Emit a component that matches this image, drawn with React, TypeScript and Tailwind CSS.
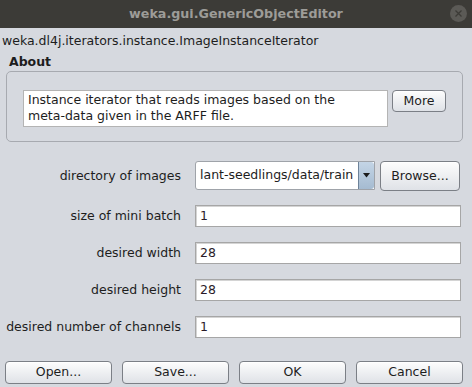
import React from 'react';

const font = { fontFamily: '"DejaVu Sans", "Liberation Sans", sans-serif' };

function SwingButton({ label, className }: { label: string; className: string }) {
  return (
    <div
      className={`flex shrink-0 items-center justify-center rounded-[4px] border border-[#7b7f86] bg-gradient-to-b from-[#fdfdfd] to-[#dfe2e7] text-[12.5px] text-[#1d1d1d] shadow-[inset_0_1px_0_#ffffff] ${className}`}
    >
      {label}
    </div>
  );
}

function Field({ value }: { value: string }) {
  return (
    <div className="flex h-[22px] w-[266px] items-center border border-[#a6a6a6] bg-white pl-[4px] text-[12.5px] text-[#2a1a28] shadow-[inset_1px_1px_0_#d4d4d4]">
      {value}
    </div>
  );
}

function Row({ label, children }: { label: string; children: React.ReactNode }) {
  return (
    <div className="flex shrink-0 items-center">
      <div className="w-[182px] whitespace-nowrap pr-[1px] text-right text-[12.5px] text-[#1d1d1d]">{label}</div>
      <div className="ml-[13px] flex">{children}</div>
    </div>
  );
}

export default function App() {
  return (
    <div className="flex h-[387px] w-[472px] flex-col overflow-hidden bg-[#d6d9df]" style={font}>
      {/* window title */}
      <div className="relative flex h-[28px] shrink-0 items-center justify-center bg-[#3c3b37]">
        <span className="text-[12.7px] font-bold text-[#9d9c98]">weka.gui.GenericObjectEditor</span>
        <div className="absolute right-[5px] top-[5px] flex h-[17px] w-[17px] items-center justify-center rounded-full bg-[#5b5a56]">
          <svg width="7" height="7" viewBox="0 0 7 7">
            <path d="M0.5 0.5 L6.5 6.5 M6.5 0.5 L0.5 6.5" stroke="#3c3b37" strokeWidth="1.3" />
          </svg>
        </div>
      </div>

      <div className="shrink-0 pl-[2px] pt-[4px] text-[12.5px] leading-[17px] text-[#1d1d1d]">
        weka.dl4j.iterators.instance.ImageInstanceIterator
      </div>

      <div className="shrink-0 pl-[9px] pt-[5px] text-[12.5px] font-bold leading-[16px] text-[#1d1d1d]">About</div>

      {/* about panel */}
      <div className="ml-[6px] mt-[1px] flex h-[71px] w-[457px] shrink-0 items-start rounded-[5px] border border-[#a7aab0] pl-[16px] pt-[18px]">
        <div className="h-[37px] w-[365px] border border-[#b4b4b4] bg-white px-[4px] pt-[1px] text-[12.5px] leading-[16px] text-[#1d1d1d]">
          Instance iterator that reads images based on the
          <br />
          meta-data given in the ARFF file.
        </div>
        <SwingButton label="More" className="ml-[4px] h-[22px] w-[54px]" />
      </div>

      {/* properties */}
      <div className="mt-[19px] flex shrink-0 flex-col">
        <Row label="directory of images">
          <div className="flex h-[29px] w-[180px] items-center rounded-l-[3px] border border-[#9fa3a9] bg-white pl-[4px] text-[12.5px] text-[#1d1d1d]">
            <span className="flex-1 overflow-hidden whitespace-nowrap">lant-seedlings/data/train</span>
            <div className="flex h-full w-[16px] items-center justify-center rounded-r-[3px] border-l border-[#6d8299] bg-gradient-to-b from-[#c4d5e6] to-[#a5bbd1]">
              <svg width="7" height="5" viewBox="0 0 7 5">
                <path d="M0 0 H7 L3.5 4.5 Z" fill="#1b1b1b" />
              </svg>
            </div>
          </div>
          <SwingButton label="Browse..." className="ml-[5px] h-[30px] w-[80px]" />
        </Row>
        <div className="mt-[14px] flex flex-col gap-[15px]">
          <Row label="size of mini batch">
            <Field value="1" />
          </Row>
          <Row label="desired width">
            <Field value="28" />
          </Row>
          <Row label="desired height">
            <Field value="28" />
          </Row>
          <Row label="desired number of channels">
            <Field value="1" />
          </Row>
        </div>
      </div>

      {/* buttons */}
      <div className="ml-[5px] mt-[23px] flex shrink-0 gap-[10px]">
        <SwingButton label="Open..." className="h-[23px] w-[107px]" />
        <SwingButton label="Save..." className="h-[23px] w-[107px]" />
        <SwingButton label="OK" className="h-[23px] w-[107px]" />
        <SwingButton label="Cancel" className="h-[23px] w-[107px]" />
      </div>
    </div>
  );
}
